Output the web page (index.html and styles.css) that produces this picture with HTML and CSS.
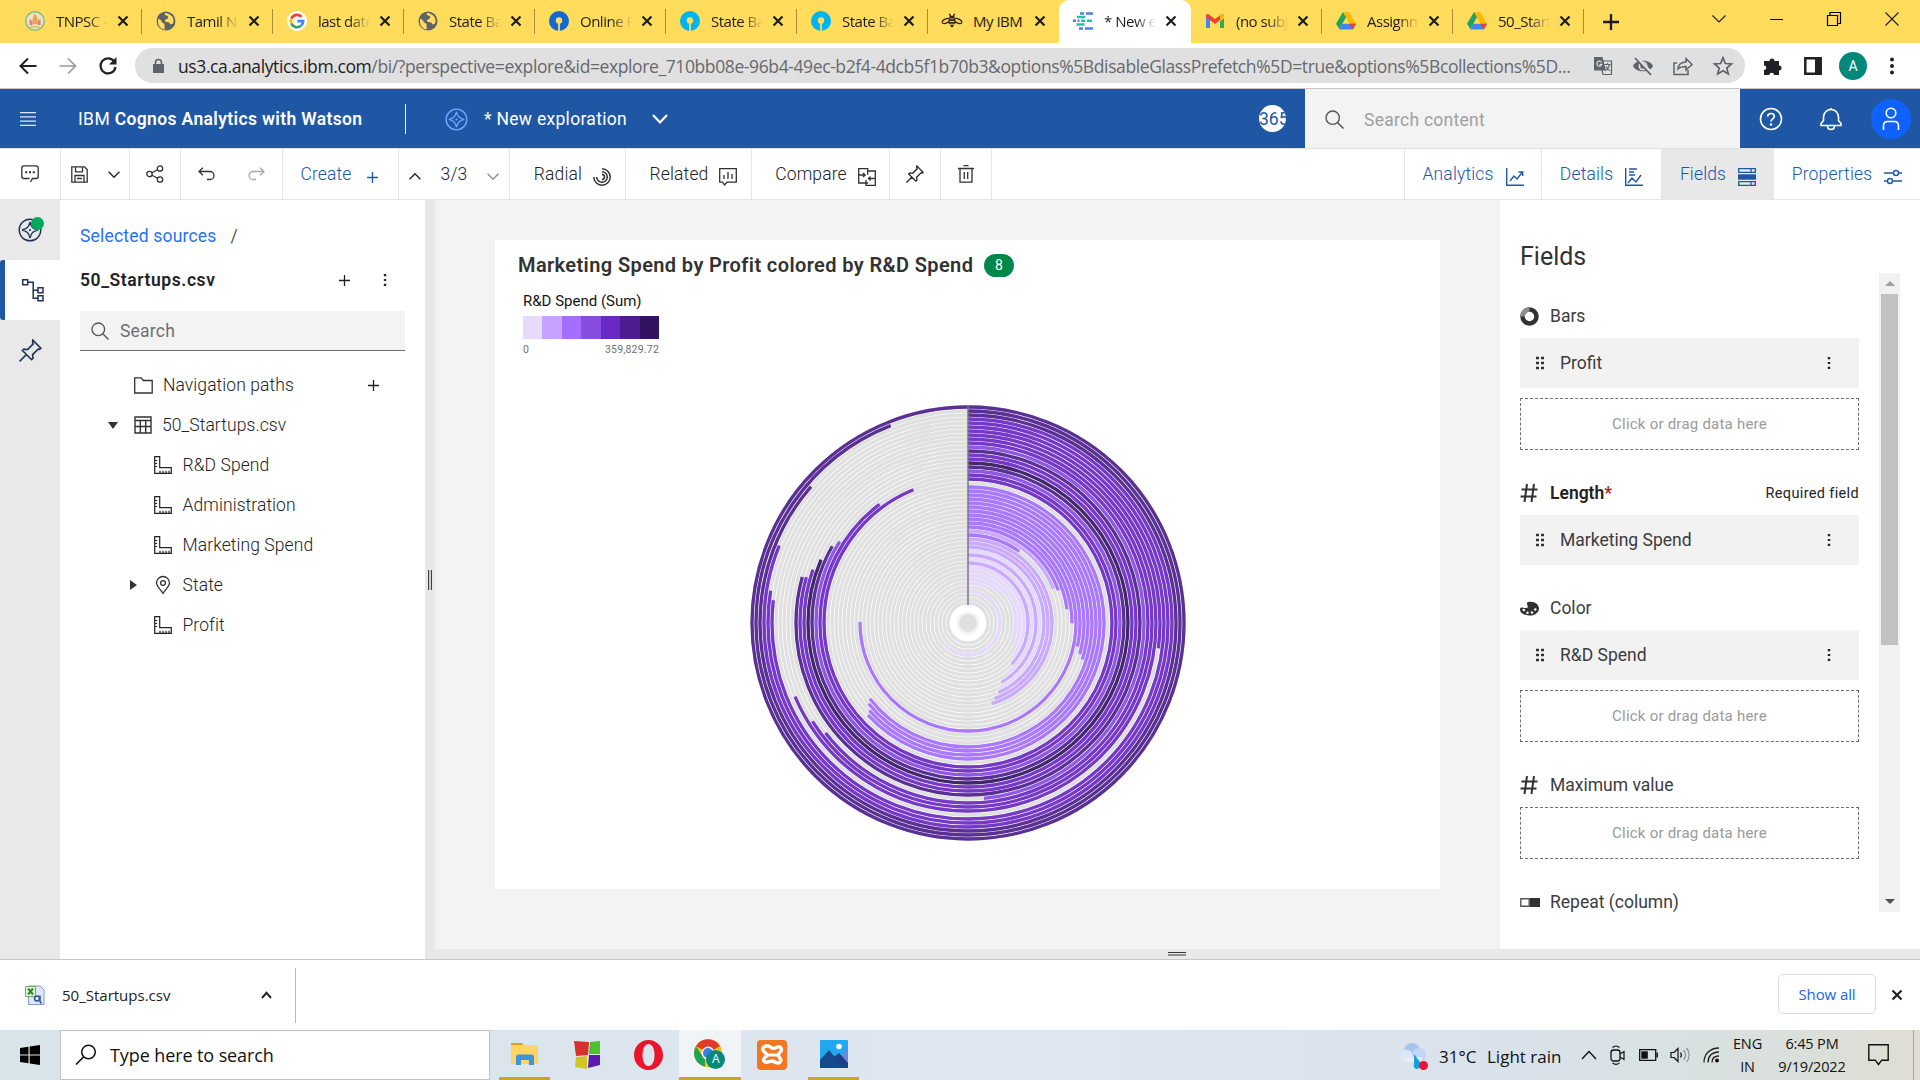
FILE: index.html
```html
<!DOCTYPE html>
<html lang="en">
<head>
<meta charset="utf-8">
<title>New exploration</title>
<link rel="stylesheet" href="styles.css">
</head>
<body>
<svg class="defs" width="0" height="0">
  <defs>
    <symbol id="close" viewBox="0 0 12 12"><path d="M1.5 1.5l9 9M10.500 1.500l-9 9" fill="none" stroke="currentColor" stroke-width="2.200"/></symbol>
    <symbol id="globe" viewBox="0 0 20 20"><circle cx="10" cy="10" r="9.500" fill="#5f6368"/><path d="M2 8c2 0 3 1 3.500 2.500S8 12 8.500 13.500 8 17 9 18.500C5 18 2 15 2 11zM9 2c-1 2 1 2.500 2.500 3S12 8 10 8.500s-1 2.500 1 2.500 3 1 3.500 2.500l2.500-1c1-2 .5-5-.5-6.500S12 2 9 2z" fill="#ffdc5c"/></symbol>
    <symbol id="drive" viewBox="0 0 20 18"><path d="M7 0h6L7 10.500 3.300 17 0 11.800z" fill="#1ea362"/><path d="M7 0h6l7 11.800h-6.500z" fill="#ffba00"/><path d="M6.300 11.800H20L17 17.500H3z" fill="#4285f4"/><path d="M13.500 11.800H20L16.700 17.500z" fill="#ea4335"/></symbol>
    <symbol id="sbi" viewBox="0 0 20 20"><circle cx="10" cy="10" r="10" fill="currentColor"/><circle cx="10" cy="9.500" r="3.200" fill="#ffdc5c"/><path d="M9.100 10h1.800v10H9.100z" fill="#ffdc5c"/></symbol>
    <symbol id="ruler" viewBox="0 0 18 18"><path d="M.7.700h5v11h11.600v5.600H.7zM.7 4.500h2.500M.7 7.500h2.500M.7 10.500h2.500M6 17v-2.300M9 17v-2.300M12 17v-2.300M15 17v-2.300" fill="none" stroke="currentColor" stroke-width="1.200"/></symbol>
    <symbol id="plus" viewBox="0 0 10 10"><path d="M5 0v10M0 5h10" stroke="currentColor" stroke-width="1.200"/></symbol>
    <symbol id="dots" viewBox="0 0 4 14"><path d="M.8 1h2.400v2.200H.8zM.8 5.900h2.400v2.200H.8zM.8 10.800h2.400V13H.8z" fill="currentColor"/></symbol>
    <symbol id="grip" viewBox="0 0 8 14"><path d="M0 .8h3v2.400H0zM5 .8h3v2.400H5zM0 5.800h3v2.400H0zM5 5.800h3v2.400H5zM0 10.800h3v2.400H0zM5 10.800h3v2.400H5z" fill="#323232"/></symbol>
    <symbol id="chev" viewBox="0 0 12 7"><path d="M.6.800L6 6.200 11.400.8" fill="none" stroke="currentColor" stroke-width="1.400"/></symbol>
    <symbol id="pin" viewBox="0 0 20 20"><path d="M12 1l7 7-1.200 1.200-1-.6-5 5 .4 3.200-1.200 1.200L3 10l1.200-1.200 3.200.4 5-5-.600-1zM6.700 13.300L.5 19.500" fill="none" stroke="currentColor" stroke-width="1.400"/></symbol>
    <symbol id="compass" viewBox="0 0 24 24"><circle cx="12" cy="12" r="10.800" fill="none" stroke="currentColor" stroke-width="1.400"/><path d="M12 4c1.200 5 3 6.800 8 8-5 1.200-6.800 3-8 8-1.200-5-3-6.800-8-8 5-1.200 6.800-3 8-8z" fill="none" stroke="currentColor" stroke-width="1.300"/><circle cx="12" cy="12" r="1.100" fill="currentColor"/></symbol>
    <symbol id="mag" viewBox="0 0 18 18"><circle cx="7.300" cy="7.300" r="6.300" fill="none" stroke="currentColor" stroke-width="1.300"/><path d="M11.800 11.800L17.500 17.500" stroke="currentColor" stroke-width="1.400"/></symbol>
    <symbol id="hash" viewBox="0 0 18 20"><path d="M7 1L4.500 19M14 1l-2.500 18M1.500 6.500h16M.5 13.500h16" stroke="#323232" stroke-width="2" fill="none"/></symbol>
  </defs>
</svg>

<div class="tabs">
  <div class="tab"><svg class="fav" viewBox="0 0 20 20"><circle cx="10" cy="10" r="9.300" fill="#e9e3c0" stroke="#7fb584" stroke-width="1.300"/><path d="M10 2l2.500 6-.5 5H8l-.5-5z" fill="#f0a050"/><path d="M4.500 8l3 2v4h-3zM15.500 8l-3 2v4h3z" fill="#e08080"/><path d="M5 15h10v2H5z" fill="#d8d060"/></svg><span>TNPSC - T</span><svg class="x"><use href="#close"/></svg></div>
  <div class="tab"><svg class="fav"><use href="#globe"/></svg><span>Tamil Nadu</span><svg class="x"><use href="#close"/></svg></div>
  <div class="tab"><svg class="fav" viewBox="0 0 20 20"><circle cx="10" cy="10" r="10" fill="#fff"/><g fill="none" stroke-width="2.700"><path d="M14.600 5.800A6.200 6.200 0 0 0 4.400 7.400" stroke="#ea4335"/><path d="M4.400 7.400a6.200 6.200 0 0 0 0 5.200" stroke="#fbbc05"/><path d="M4.400 12.600a6.200 6.200 0 0 0 9.600 2.200" stroke="#34a853"/><path d="M14 14.800a6.200 6.200 0 0 0 2.200-4.600H10.300" stroke="#4285f4"/></g></svg><span>last date t</span><svg class="x"><use href="#close"/></svg></div>
  <div class="tab"><svg class="fav"><use href="#globe"/></svg><span>State Bank</span><svg class="x"><use href="#close"/></svg></div>
  <div class="tab"><svg class="fav online"><use href="#sbi"/></svg><span>Online Re</span><svg class="x"><use href="#close"/></svg></div>
  <div class="tab"><svg class="fav sbi"><use href="#sbi"/></svg><span>State Bank</span><svg class="x"><use href="#close"/></svg></div>
  <div class="tab"><svg class="fav sbi"><use href="#sbi"/></svg><span>State Bank</span><svg class="x"><use href="#close"/></svg></div>
  <div class="tab nosep"><svg class="fav" viewBox="0 0 20 20"><g fill="none" stroke="#2b2613" stroke-width="1.300"><ellipse cx="4" cy="10" rx="4" ry="2" transform="rotate(-25 4 10)"/><ellipse cx="16" cy="10" rx="4" ry="2" transform="rotate(25 16 10)"/><path d="M7 3l2 2M13 3l-2 2"/></g><path d="M7.500 5h5v2.500h-5zM6.800 8.300h6.400v1.800H6.800zM6.500 11h7v1.800h-7zM7.500 13.700h5l-2.500 3z" fill="#2b2613"/></svg><span class="solid">My IBM</span><svg class="x"><use href="#close"/></svg></div>
  <div class="tab active"><svg class="fav" viewBox="0 0 20 20"><g stroke-width="2.500"><path d="M7 2.500h4M13 2.500h7M0 9.700h3M4.500 9.700h2M6 17.500h4M12 17.500h8" stroke="#4b7ff0"/><path d="M4 6h8M8 9.700h4M14 9.700h5M3.500 13.500h8" stroke="#1cc7b0"/></g></svg><span>* New exp</span><svg class="x"><use href="#close"/></svg></div>
  <div class="tab"><svg class="fav" viewBox="0 0 20 20"><path d="M1 4v13h4V8z" fill="#4285f4"/><path d="M19 4v13h-4V8z" fill="#34a853"/><path d="M1 4.500C1 3 3 2.500 4 3.500l6 4.500 6-4.500c1-1 3-.5 3 1V6l-9 7-9-7z" fill="#ea4335"/><path d="M15 4.200l1.500-1C18 3 19 3.500 19 5v2.500l-4 3z" fill="#fbbc04"/></svg><span>(no subject</span><svg class="x"><use href="#close"/></svg></div>
  <div class="tab"><svg class="fav"><use href="#drive"/></svg><span>Assignme</span><svg class="x"><use href="#close"/></svg></div>
  <div class="tab"><svg class="fav"><use href="#drive"/></svg><span>50_Startup</span><svg class="x"><use href="#close"/></svg></div>
  <svg class="newtab" viewBox="0 0 16 16"><path d="M8 0v16M0 8h16" stroke="#1b1b1b" stroke-width="2.300"/></svg>
  <div class="win">
    <svg width="14" height="8" viewBox="0 0 14 8"><path d="M.5.5L7 7 13.500.5" fill="none" stroke="#222" stroke-width="1.200"/></svg>
    <svg width="13" height="14" viewBox="0 0 13 14"><path d="M0 7.500h13" stroke="#000"/></svg>
    <svg width="14" height="14" viewBox="0 0 14 14"><path d="M.5 3.500h10v10H.5zM3 3.500v-3h10.500v11H11" fill="none" stroke="#000" stroke-width="1.200"/></svg>
    <svg width="14" height="14" viewBox="0 0 14 14"><path d="M.5.5l13 13M13.500.5l-13 13" stroke="#222" stroke-width="1.200"/></svg>
  </div>
</div>

<div class="address">
  <svg class="nav" viewBox="0 0 18 18"><path d="M17.500 9H1.500M9 1.500L1.500 9 9 16.500" fill="none" stroke="#202124" stroke-width="2"/></svg>
  <svg class="nav" viewBox="0 0 18 18"><path d="M.5 9h16M9 1.500L16.500 9 9 16.500" fill="none" stroke="#9a9b9d" stroke-width="1.700"/></svg>
  <svg class="nav" viewBox="0 0 18 18"><path d="M15.500 5A7.500 7.500 0 1 0 16.500 10" fill="none" stroke="#202124" stroke-width="2.200"/><path d="M17.500 0v7.500H10z" fill="#202124"/></svg>
  <div class="pill">
    <svg class="lock" width="11" height="14" viewBox="0 0 11 14"><path d="M0 5h11v9H0z" fill="#5f6368"/><path d="M2.500 6V3.500a3 3 0 0 1 6 0V6" fill="none" stroke="#5f6368" stroke-width="1.600"/></svg>
    <span class="url"><b>us3.ca.analytics.ibm.com</b>/bi/?perspective=explore&amp;id=explore_710bb08e-96b4-49ec-b2f4-4dcb5f1b70b3&amp;options%5BdisableGlassPrefetch%5D=true&amp;options%5Bcollections%5D...</span>
    <div class="pillicons">
      <svg width="20" height="20" viewBox="0 0 20 20"><path d="M7 5h11.500v13.500H10z" fill="none" stroke="#5f6368" stroke-width="1.200"/><path d="M1 1h8.500L13 14.500H1z" fill="#5f6368"/><path d="M8.500 6.300a2.500 2.500 0 1 0 .3 2H6.500" fill="none" stroke="#e0e0e0" stroke-width="1.200"/><path d="M11.500 8.500h6M14.500 7v1.500M16.500 9c-.5 2-2 4-4 5.500M13 10.500l4 4.500" fill="none" stroke="#5f6368" stroke-width="1.100"/></svg>
      <svg width="20" height="20" viewBox="0 0 20 20"><path d="M0 10c3-7 17-7 20 0-3 7-17 7-20 0z" fill="#5f6368"/><circle cx="10" cy="10" r="3.600" fill="none" stroke="#e0e0e0" stroke-width="1.800"/><path d="M3 1l16 17" stroke="#e0e0e0" stroke-width="3.500"/><path d="M2 2l16 17" stroke="#5f6368" stroke-width="1.800"/></svg>
      <svg width="20" height="20" viewBox="0 0 20 20"><path d="M4 7H1v11.500h14V14M5 13c.5-5 3-7 8-7V2.500l6 6-6 5.500v-3.500c-4 0-6 .5-8 2.500z" fill="none" stroke="#5f6368" stroke-width="1.500"/></svg>
      <svg width="20" height="20" viewBox="0 0 20 20"><path d="M10 1.800l2.400 5.700 6.100.5-4.700 4 1.500 6-5.300-3.300L4.700 18l1.500-6-4.700-4 6.100-.5z" fill="none" stroke="#5f6368" stroke-width="1.700"/></svg>
    </div>
  </div>
  <div class="exticons">
    <svg width="20" height="20" viewBox="0 0 20 20"><path d="M1 5h5.500a2.500 2.500 0 1 1 5 0H16v4.500a2.500 2.500 0 1 1 0 5V19h-5a2.300 2.300 0 0 0-4.600 0H1v-5a2.300 2.300 0 0 0 0-4.600z" fill="#202124"/></svg>
    <svg width="18" height="18" viewBox="0 0 18 18"><path d="M1.300 1.300h15.400v15.400H1.300z" fill="none" stroke="#202124" stroke-width="2.500"/><path d="M11 1h6v16h-6z" fill="#202124"/></svg>
    <div class="ava">A</div>
    <svg width="4" height="18" viewBox="0 0 4 18"><circle cx="2" cy="2.500" r="2" fill="#202124"/><circle cx="2" cy="9" r="2" fill="#202124"/><circle cx="2" cy="15.500" r="2" fill="#202124"/></svg>
  </div>
</div>

<header class="header">
  <svg class="burger" viewBox="0 0 16 14"><path d="M0 .7h16M0 4.900h16M0 9.100h16M0 13.300h16" stroke="#dfe9f7" stroke-width="1.200"/></svg>
  <div class="brand">IBM <b>Cognos Analytics with Watson</b></div>
  <i class="bar"></i>
  <svg class="comp"><use href="#compass"/></svg>
  <div class="expl">* New exploration</div>
  <svg class="hchev" viewBox="0 0 16 10"><path d="M1 1l7 7.500L15 1" fill="none" stroke="#fff" stroke-width="2.200"/></svg>
  <div class="c365"><span>365</span></div>
  <div class="hsearch"><svg width="19" height="19"><use href="#mag"/></svg><span>Search content</span></div>
  <div class="hicons">
    <svg width="24" height="24" viewBox="0 0 24 24"><circle cx="12" cy="12" r="10.500" fill="none" stroke="#fff" stroke-width="1.600"/><path d="M8.700 9.500c0-4 6.600-4 6.600 0 0 2.500-3.300 2.200-3.300 5" fill="none" stroke="#fff" stroke-width="1.700"/><circle cx="12" cy="17.500" r="1.200" fill="#fff"/></svg>
    <svg width="24" height="24" viewBox="0 0 24 24"><path d="M12 1v2M2 18.500v-2l2.500-3V10a7.500 7.500 0 0 1 15 0v3.500l2.500 3v2zM8.500 19c0 4.500 7 4.500 7 0" fill="none" stroke="#fff" stroke-width="1.600"/></svg>
    <div class="user"><svg width="18" height="24" viewBox="0 0 18 24"><circle cx="9" cy="6" r="4.800" fill="none" stroke="#fff" stroke-width="1.600"/><path d="M1.500 23v-4c0-3 1.500-4.500 4-4.500h7c2.500 0 4 1.500 4 4.500v4" fill="none" stroke="#fff" stroke-width="1.600"/></svg></div>
  </div>
</header>

<div class="toolbar">
  <div class="tb w60"><svg width="18" height="18" viewBox="0 0 18 18"><path d="M9.500 17l2-3.500H15c1.500 0 2.200-.7 2.200-2V3c0-1.500-.7-2.200-2.200-2.200H3C1.500.8.800 1.500.8 3v8.500c0 1.300.7 2 2.200 2h5.500" fill="none" stroke="#323232" stroke-width="1.300"/><path d="M4.200 6.300h2v2h-2zM8 6.300h2v2H8zM11.800 6.300h2v2h-2z" fill="#323232"/></svg></div>
  <div class="tb w69 save"><svg width="17" height="17" viewBox="0 0 17 17"><path d="M.8.800h12.700l2.700 2.700v12.700H.8zM4.500.8v5h7v-5M4 16V9.500h9V16M6 12.500h5" fill="none" stroke="#323232" stroke-width="1.300"/></svg><svg width="12" height="7"><use href="#chev"/></svg></div>
  <div class="tb w51"><svg width="18" height="18" viewBox="0 0 18 18"><g fill="none" stroke="#323232" stroke-width="1.300"><circle cx="3.500" cy="9" r="2.700"/><circle cx="14" cy="3.500" r="2.700"/><circle cx="14" cy="14.500" r="2.700"/><path d="M6 7.800l5.500-3M6 10.200l5.500 3"/></g></svg></div>
  <div class="tb w102 undo"><svg width="17" height="14" viewBox="0 0 17 14"><path d="M5 .8L1 4.500l4 3.700M1 4.500h11a4 4 0 0 1 0 8H9" fill="none" stroke="#323232" stroke-width="1.300"/></svg><svg width="17" height="14" viewBox="0 0 17 14"><path d="M12 .8l4 3.700-4 3.700M16 4.500H5a4 4 0 0 0 0 8h3" fill="none" stroke="#a9a9a9" stroke-width="1.300"/></svg></div>
  <div class="tb w116 blue create"><span>Create</span><svg class="lo" width="11" height="11"><use href="#plus"/></svg></div>
  <div class="tb w111 pages"><svg class="up" width="12" height="7"><use href="#chev"/></svg><span>3/3</span><svg class="dn" width="12" height="7"><use href="#chev"/></svg></div>
  <div class="tb w116 lab"><span>Radial</span><svg class="lo" width="18" height="18" viewBox="0 0 18 18"><g fill="none" stroke="#323232" stroke-width="1.500"><path d="M9 .8a8.200 8.200 0 1 1-8.200 8.200"/><path d="M9 3.700a5.300 5.300 0 1 1-5.300 5.300"/><path d="M9 6.500a2.500 2.500 0 0 1 0 5"/></g></svg></div>
  <div class="tb w126 lab"><span>Related</span><svg class="lo" width="18" height="18" viewBox="0 0 18 18"><path d="M.7.700h16.600v13.500H8L5.500 17 3.500 14.200H.7zM5 11V7M9 11V4M13 11V6" fill="none" stroke="#323232" stroke-width="1.300"/></svg></div>
  <div class="tb w138 lab"><span>Compare</span><svg class="lo" width="18" height="18" viewBox="0 0 18 18"><path d="M10 15H.7V.7h9v6M8 12V17.300h9.300V3H10M1 7h6M5 5l2.200 2L5 9M16.500 10.500h-6M12.500 8.500l-2 2 2 2" fill="none" stroke="#323232" stroke-width="1.300"/></svg></div>
  <div class="tb w51"><svg width="18" height="18" class="ink"><use href="#pin"/></svg></div>
  <div class="tb w51"><svg width="16" height="18" viewBox="0 0 16 18"><path d="M0 3.500h16M5.500.7h5M2 3.500v13.700h12V3.500M6.300 7v7M9.700 7v7" fill="none" stroke="#323232" stroke-width="1.300"/></svg></div>
  <div class="right">
    <div class="tb w137 blue lab2"><span>Analytics</span><svg class="lo" width="18" height="18" viewBox="0 0 18 18"><path d="M.7 0v17.300H18M4 13l4-5 3 3 5.500-7M12.500 4h4.200v4" fill="none" stroke="#1f57a4" stroke-width="1.400"/></svg></div>
    <div class="tb w120 blue lab2"><span>Details</span><svg class="lo" width="18" height="18" viewBox="0 0 18 18"><path d="M.7 0v17.300H18M4 1h8M4 4h5M4 7h6M3 15l4-5 4 4 5-7" fill="none" stroke="#1f57a4" stroke-width="1.400"/></svg></div>
    <div class="tb w112 blue lab2 on"><span>Fields</span><svg class="lo" width="18" height="18" viewBox="0 0 18 18"><path d="M.7.700h16.600v3.600H.7zM.7 13.700h16.600v3.600H.7zM13 1v3M13 14v3" fill="none" stroke="#1f57a4" stroke-width="1.300"/><path d="M0 6.300h18v5.400H0z" fill="#1f57a4"/></svg></div>
    <div class="tb w146 blue lab2"><span>Properties</span><svg class="lo" width="18" height="18" viewBox="0 0 18 18"><g fill="none" stroke="#1f57a4" stroke-width="1.400"><circle cx="12" cy="5" r="2.500"/><circle cx="6" cy="13" r="2.500"/><path d="M0 5h9.500M14.500 5H18M0 13h3.500M8.500 13H18"/></g></svg></div>
  </div>
</div>

<main class="main">
  <nav class="rail">
    <div class="ri"><svg width="24" height="24"><use href="#compass"/></svg><i class="green"></i></div>
    <div class="ri sel"><svg width="24" height="24" viewBox="0 0 24 24"><path d="M1.700 1.700h5v5h-5zM17 9.700h5v5h-5zM17 17.700h5v5h-5zM6.700 4.200h5.500v16H17M12.200 12.200H17" fill="none" stroke="#1d3458" stroke-width="1.500"/></svg></div>
    <div class="ri"><svg width="23" height="23"><use href="#pin"/></svg></div>
  </nav>
  <aside class="sources">
    <div class="crumb"><a>Selected sources</a><em>/</em></div>
    <div class="src"><b>50_Startups.csv</b><svg width="11" height="11"><use href="#plus"/></svg><svg width="4" height="14"><use href="#dots"/></svg></div>
    <div class="find"><svg width="18" height="18"><use href="#mag"/></svg><span>Search</span></div>
    <div class="row l1"><svg width="19" height="17" viewBox="0 0 19 17"><path d="M.7.800h6.500l2.300 2.700h8.700v12.500H.7z" fill="none" stroke="#323232" stroke-width="1.300"/></svg><span>Navigation paths</span><svg class="add" width="11" height="11"><use href="#plus"/></svg></div>
    <div class="row l1"><i class="tri down"></i><svg width="18" height="18" viewBox="0 0 18 18"><path d="M1 1h16v16H1zM1 4.500h16M1 10.500h16M6.300 4.500V17M11.700 4.500V17" fill="none" stroke="#323232" stroke-width="1.400"/></svg><span>50_Startups.csv</span></div>
    <div class="row l2"><svg width="18" height="18"><use href="#ruler"/></svg><span>R&amp;D Spend</span></div>
    <div class="row l2"><svg width="18" height="18"><use href="#ruler"/></svg><span>Administration</span></div>
    <div class="row l2"><svg width="18" height="18"><use href="#ruler"/></svg><span>Marketing Spend</span></div>
    <div class="row l2"><i class="tri side"></i><svg width="18" height="18" viewBox="0 0 18 18"><path d="M9 17.300C6 13 2.500 10 2.500 7a6.500 6.500 0 0 1 13 0c0 3-3.500 6-6.500 10.300z" fill="none" stroke="#323232" stroke-width="1.300"/><circle cx="9" cy="7" r="2.400" fill="none" stroke="#323232" stroke-width="1.300"/></svg><span>State</span></div>
    <div class="row l2"><svg width="18" height="18"><use href="#ruler"/></svg><span>Profit</span></div>
  </aside>
  <div class="split"><i></i></div>
  <div class="work">
    <div class="upper">
      <section class="canvas">
        <div class="card">
          <div class="title"><h2>Marketing Spend by Profit colored by R&amp;D Spend</h2><span class="badge">8</span></div>
          <div class="ltitle"><span>R&amp;D Spend (Sum)</span></div>
          <div class="legend"><i class="s0"></i><i class="s1"></i><i class="s2"></i><i class="s3"></i><i class="s4"></i><i class="s5"></i><i class="s6"></i></div>
          <div class="scale"><span>0</span><span>359,829.72</span></div>
          <svg class="radial" id="radial" width="440" height="440" viewBox="-220 -220 440 440"></svg>
        </div>
      </section>
      <aside class="fields">
        <h3><span>Fields</span></h3>
        <div class="fcols">
        <div class="flist">
          <div class="fh"><svg width="19" height="19" viewBox="0 0 19 19"><circle cx="9.500" cy="9.500" r="7" fill="none" stroke="#323232" stroke-width="4.500"/><path d="M2.500 9.500a7 7 0 0 1 7-7" fill="none" stroke="#8c8c8c" stroke-width="4.500"/></svg><span>Bars</span></div>
          <div class="chip"><svg width="8" height="14"><use href="#grip"/></svg><span>Profit</span><svg width="4" height="14"><use href="#dots"/></svg></div>
          <div class="drop"><span>Click or drag data here</span></div>
          <div class="fh"><svg width="18" height="20"><use href="#hash"/></svg><b>Length</b><em>*</em><small>Required field</small></div>
          <div class="chip"><svg width="8" height="14"><use href="#grip"/></svg><span>Marketing Spend</span><svg width="4" height="14"><use href="#dots"/></svg></div>
          <div class="fh"><svg width="19" height="15" viewBox="0 0 19 15"><path d="M8 1c6-1.500 11 2 11 6.500S14 15 9 14.500 0 12 0 8.500 3 7 5.500 7 8 6 7.500 4.500 6.500 1.500 8 1z" fill="#323232"/><g fill="#fff"><circle cx="3.800" cy="9" r="1.300"/><circle cx="7.500" cy="11.800" r="1.200"/><circle cx="12" cy="11.500" r="1.200"/><circle cx="15.300" cy="8.500" r="1.200"/></g></svg><span>Color</span></div>
          <div class="chip"><svg width="8" height="14"><use href="#grip"/></svg><span>R&amp;D Spend</span><svg width="4" height="14"><use href="#dots"/></svg></div>
          <div class="drop"><span>Click or drag data here</span></div>
          <div class="fh"><svg width="18" height="20"><use href="#hash"/></svg><span>Maximum value</span></div>
          <div class="drop"><span>Click or drag data here</span></div>
          <div class="fh"><svg width="20" height="9" viewBox="0 0 20 9"><path d="M.8.800h8.400v7.400H.8z" fill="#fff" stroke="#555" stroke-width="1.400"/><path d="M10 0h10v9H10z" fill="#323232"/></svg><span>Repeat (column)</span></div>
        </div>
        <div class="sbar"><i class="sup"></i><i class="thumb"></i><i class="sdn"></i></div>
        </div>
      </aside>
    </div>
    <div class="hsplit"><i></i></div>
  </div>
</main>

<div class="downloads">
  <div class="dl">
    <svg width="20" height="20" viewBox="0 0 20 20"><path d="M3.500 1H15l4 4v14.500H3.500z" fill="#dce8f8" stroke="#7d9ccc"/><path d="M.5 1.500h10v10H.5z" fill="#e7f5e2" stroke="#6da862"/><path d="M3 3.500l5 6M8 3.500l-5 6" stroke="#2a8a2e" stroke-width="2"/><circle cx="12" cy="13.500" r="2.500" fill="none" stroke="#2d5590" stroke-width="1.500"/><path d="M15 10.500v6l1.500 2" fill="none" stroke="#2d5590" stroke-width="1.500"/></svg>
    <span>50_Startups.csv</span>
    <svg class="dchev" width="11" height="8" viewBox="0 0 11 8"><path d="M1 7l4.500-5.200L10 7" fill="none" stroke="#222" stroke-width="2"/></svg>
  </div>
  <div class="showall"><span>Show all</span></div>
  <svg class="dx" width="12" height="12"><use href="#close"/></svg>
</div>

<footer class="taskbar">
  <div class="start"><svg width="20" height="20" viewBox="0 0 20 20"><path d="M0 3l8.500-1.300v7.800H0zM9.700 1.500L20 0v9.500H9.700zM0 10.600h8.500v7.700L0 17zM9.700 10.600H20V20L9.700 18.500z" fill="#000"/></svg></div>
  <div class="tsearch"><svg width="22" height="22" viewBox="0 0 22 22"><circle cx="13.500" cy="8" r="6.800" fill="none" stroke="#111" stroke-width="1.500"/><path d="M8.700 12.800L1 20.500" stroke="#111" stroke-width="1.600"/></svg><span>Type here to search</span></div>
  <div class="apps">
    <div class="app run2"><svg width="28" height="24" viewBox="0 0 28 24"><path d="M0 1h11l2 3H0z" fill="#e0a010"/><path d="M0 3h27v19H0z" fill="#ffd561"/><path d="M5 23v-8c0-1.500 1-2.500 2.500-2.500h13c1.500 0 2.500 1 2.500 2.500v8h-5v-5h-8v5z" fill="#3b95dd"/></svg></div>
    <div class="app"><svg width="28" height="30" viewBox="0 0 28 30"><path d="M1 1l15 1-1 13-12 1z" fill="#d9302c"/><path d="M17 2l10-1v13H16z" fill="#4fc02e"/><path d="M3 17l11-1v13l-12-2z" fill="#cfc626"/><path d="M16 15h11v10l-12 3z" fill="#5b1cae"/></svg></div>
    <div class="app"><svg width="29" height="30" viewBox="0 0 29 30"><path fill-rule="evenodd" d="M14.500 0C23 0 29 7 29 15s-6 15-14.500 15S0 23 0 15 6 0 14.500 0zm0 4C10.500 4 8.500 9 8.500 15s2 11 6 11 6-5 6-11-2-11-6-11z" fill="#e8152b"/></svg></div>
    <div class="app on"><svg width="32" height="32" viewBox="0 0 32 32"><circle cx="14" cy="15" r="14" fill="#fbc116"/><path d="M14 15L2 8a14 14 0 0 1 24 0z" fill="#e23b2e"/><path d="M2 8l9 14 0 6.700A14 14 0 0 1 2 8z" fill="#1da35a"/><circle cx="14" cy="15" r="6.500" fill="#fff"/><circle cx="14" cy="15" r="5" fill="#3b7ded"/><circle cx="21.500" cy="21.500" r="9.500" fill="#08897b"/></svg><em>A</em></div>
    <div class="app"><svg width="30" height="30" viewBox="0 0 30 30"><rect width="30" height="30" rx="4" fill="#f37623"/><path d="M6 8c3-4 6-2 9 0s7-4 9 0-3 5-3 7 5 4 2 7-5-1-8-1-6 3-8 0 3-4 3-6-6-4-4-7z" fill="none" stroke="#fff" stroke-width="3.500"/><path d="M9 15h12" stroke="#fff" stroke-width="3"/></svg></div>
    <div class="app run"><svg width="28" height="28" viewBox="0 0 28 28"><rect width="28" height="28" rx="1" fill="#22a8ee"/><path d="M28 7v21H14z" fill="#7285dc"/><path d="M0 20l9-10 15 18H0z" fill="#134a8e"/><path d="M14 17l5-4 9 10v5H22z" fill="#1d3f86"/><circle cx="19" cy="6.500" r="2.800" fill="#fff"/></svg></div>
  </div>
  <div class="tray">
    <svg class="wx" width="30" height="28" viewBox="0 0 30 28"><circle cx="13" cy="8" r="8" fill="#a9c4ec"/><circle cx="7" cy="13" r="6.500" fill="#dbe6f7"/><circle cx="20" cy="12" r="7" fill="#c3d5f2"/><path d="M5 14h18v5H5z" fill="#e4ecf8"/><path d="M15 11l6 8c2 4-1 7-3 7s-4-2-3-5z" fill="#1a9fe0"/><circle cx="24.500" cy="22.500" r="4.500" fill="#e5163a"/></svg>
    <span class="deg">31°C</span><span class="rain">Light rain</span>
    <div class="ticons">
      <svg width="16" height="10" viewBox="0 0 16 10"><path d="M1 9l7-7.500L15 9" fill="none" stroke="#111" stroke-width="1.400"/></svg>
      <svg width="16" height="20" viewBox="0 0 16 20"><rect x="1" y="5" width="9" height="11" rx="2.500" fill="none" stroke="#111" stroke-width="1.300"/><path d="M10 9l4-2.500v8L10 12M2.500 2.500c2-2 5-2 7 0M2.500 18c2 1.500 5 1.500 7 0" fill="none" stroke="#111" stroke-width="1.200"/></svg>
      <svg width="19" height="12" viewBox="0 0 19 12"><path d="M.7.700h16v10.600h-16zM18.300 3.500v5" fill="none" stroke="#111" stroke-width="1.300"/><path d="M2.300 2.300h6.500v7.400H2.300z" fill="#111"/></svg>
      <svg width="20" height="16" viewBox="0 0 20 16"><path d="M1 5.500h3l4-4v13l-4-4H1z" fill="none" stroke="#111" stroke-width="1.200"/><path d="M10.500 5.500c1 1.500 1 3.500 0 5" fill="none" stroke="#111" stroke-width="1.200"/><path d="M13.500 3c2.500 3 2.500 7 0 10M16.500 1c3.500 4 3.500 10 0 14" fill="none" stroke="#8d9596" stroke-width="1.200"/></svg>
      <svg width="17" height="16" viewBox="0 0 17 16"><path d="M1 15.500C1 7 7 1 16 1M5 15.500C5 9 9 5 16 5M9 15.500C9 11.500 11.500 9 16 9" fill="none" stroke="#222" stroke-width="1.300"/><circle cx="14" cy="13.500" r="2" fill="#111"/></svg>
    </div>
    <div class="two lang"><span>ENG</span><span>IN</span></div>
    <div class="two clock"><span>6:45 PM</span><span>9/19/2022</span></div>
    <svg class="note" width="21" height="22" viewBox="0 0 21 22"><path d="M.8.800h19.400v15.400h-6.500L10.500 20.500 7.300 16.200H.8z" fill="none" stroke="#111" stroke-width="1.400"/></svg>
    <i class="peek"></i>
  </div>
</footer>
<script src="radial.js"></script>
</body>
</html>
```
FILE: styles.css
```css
* { box-sizing: border-box; }
body { margin: 0; width: 1920px; height: 1080px; overflow: hidden; background: #fff; font-family: Roboto, "Liberation Sans", sans-serif; font-size: 17.5px; font-weight: 300; color: #222; display: flex; flex-direction: column; }
svg { display: block; flex: none; overflow: visible; }
.defs { display: none; }
i, em { font-style: normal; }

.tabs { height: 43px; flex: none; background: #ffdc5c; padding-left: 11px; display: flex; align-items: center; font-family: "Open Sans", sans-serif; font-weight: 400; font-size: 15px; letter-spacing: -0.5px; color: #1e1e1e; }
.tab { width: 131px; height: 43px; display: flex; align-items: center; padding: 0 0 2px 14px; position: relative; flex: none; }
.tab::after { content: ""; position: absolute; right: 0; top: 9px; width: 1px; height: 25px; background: #a58e3d; }
.tab.nosep::after, .tab.active::after { display: none; }
.fav { width: 20px; height: 20px; margin-right: 11px; }
.online { color: #1368d0; }
.sbi { color: #00b5ef; }
.tab span { width: 52px; flex: none; overflow: hidden; white-space: nowrap; -webkit-mask-image: linear-gradient(90deg, #000 60%, transparent); mask-image: linear-gradient(90deg, #000 60%, transparent); }
.tab span.solid { -webkit-mask-image: none; mask-image: none; }
.x { width: 12px; height: 12px; margin-left: 8.500px; }
.tab.active { background: #fff; border-radius: 10px 10px 0 0; width: 132px; }
.newtab { width: 16px; height: 16px; margin-left: 19px; }
.win { display: flex; align-items: center; margin: -6px 0 0 93px; gap: 44px; }

.address { height: 46px; flex: none; border-bottom: 1px solid #c6c6c6; display: flex; align-items: center; padding-left: 19px; font-weight: 400; }
.nav { width: 18px; height: 18px; margin-right: 22px; }
.pill { width: 1610px; height: 35px; border-radius: 18px; background: #e0e0e0; display: flex; align-items: center; padding-left: 18px; margin-left: -4px; }
.url { font-family: "Open Sans", sans-serif; font-size: 17.500px; letter-spacing: -0.392px; color: #66696d; margin-left: 14px; white-space: nowrap; width: 1396px; flex: none; }
.url b { font-weight: 400; color: #202124; }
.pillicons { display: flex; gap: 20px; margin-left: 19px; }
.exticons { display: flex; align-items: center; margin-left: 18px; }
.exticons svg:nth-child(2) { margin: 0 17px 0 21px; }
.ava { width: 28px; height: 28px; border-radius: 50%; background: #00897b; color: #fff; font-size: 14px; display: flex; align-items: center; justify-content: center; margin-right: 23px; }

.header { height: 59px; flex: none; background: #2057a5; color: #fff; display: flex; align-items: center; font-weight: 400; }
.burger { width: 16px; height: 14px; margin-left: 20px; }
.brand { width: 327px; margin-left: 42px; white-space: nowrap; letter-spacing: 0.36px; }
.brand b { font-weight: 600; }
.bar { width: 1px; height: 30px; background: #fff; }
.comp { width: 23px; height: 23px; color: #74a8ff; margin: 2px 16px 0 39px; }
.expl { width: 168px; white-space: nowrap; letter-spacing: 0.3px; }
.hchev { width: 16px; height: 10px; }
.c365 { width: 27px; height: 27px; border-radius: 50%; background: #fff; color: #2057a5; overflow: hidden; margin-left: 591px; display: flex; align-items: center; }
.hsearch { width: 435px; height: 59px; background: #f3f3f3; margin-left: 19px; display: flex; align-items: center; padding: 2px 0 0 20px; gap: 20px; color: #555; }
.hsearch span { color: #a0a0a0; letter-spacing: 0.26px; }
.hicons { display: flex; align-items: center; padding-left: 19px; gap: 36px; }
.user { width: 40px; height: 40px; border-radius: 50%; background: #0f62fe; display: flex; align-items: center; justify-content: center; margin-left: -8px; }

.toolbar { height: 52px; flex: none; border-top: 1px solid #e0e0e0; border-bottom: 1px solid #e5e5e5; display: flex; letter-spacing: 0.15px; }
.tb { border-right: 1px solid #e5e5e5; display: flex; align-items: center; justify-content: center; flex: none; }
.w60 { width: 61px; } .w69 { width: 69px; } .w51 { width: 51px; } .w102 { width: 102px; } .w116 { width: 116px; }
.w111 { width: 111px; } .w126 { width: 126px; } .w138 { width: 138px; } .w137 { width: 137px; } .w120 { width: 120px; } .w112 { width: 112px; } .w146 { width: 146px; }
.save { gap: 20px; } .undo { gap: 33px; }
.blue { color: #2057a5; }
.lo { margin-top: 5px; }
.create { gap: 15px; padding-right: 3px; } .create svg { margin-top: 6px; }
.pages { gap: 20px; }
.up { transform: rotate(180deg); margin-top: 4px; } .dn { color: #8d8d8d; margin-top: 4px; }
.lab { gap: 11px; padding-left: 10px; }
.lab2 { gap: 12px; }
.right { margin-left: auto; display: flex; border-left: 1px solid #e5e5e5; }
.right .tb:nth-child(n+3) { border-right: 0; }
.on.lab2 { background: #e8e8e8; }

.main { height: 759px; flex: none; display: flex; }
.rail { width: 60px; background: #e9e9e9; }
.ri { height: 60px; display: flex; align-items: center; justify-content: center; color: #1d3458; position: relative; }
.ri.sel { background: #fff; border-left: 5px solid #2057a5; border-radius: 3px 0 0 3px; }
.green { position: absolute; left: 31px; top: 17px; width: 13px; height: 13px; border-radius: 50%; background: #00a85a; }
.sources { width: 365px; padding: 24px 20px 0; }
.crumb { height: 24px; display: flex; align-items: center; color: #2970f2; letter-spacing: 0.19px; font-weight: 400; }
.crumb em { color: #555; margin-left: 14px; }
.src { height: 24px; margin-top: 20px; display: flex; align-items: center; }
.src b { font-weight: 600; width: 259px; letter-spacing: 0.58px; }
.src svg + svg { margin-left: 33px; }
.find { height: 40px; margin: 19px 0 14px; background: #f3f3f3; border-bottom: 1px solid #6f6f6f; display: flex; align-items: center; padding-left: 11px; gap: 11px; color: #555; }
.find span { color: #707070; letter-spacing: 0.21px; font-weight: 400; }
.row { height: 40px; display: flex; align-items: center; position: relative; letter-spacing: 0.08px; }
.row.l1 { padding-left: 54px; } .row.l1 span { margin-left: 10px; width: 205px; }
.row.l1 svg + span { flex: none; }
.row.l2 { padding-left: 74px; } .row.l2 span { margin-left: 10.500px; }
.tri { position: absolute; border: 5px solid transparent; }
.tri.down { left: 28px; top: 17px; border-top: 7px solid #323232; }
.tri.side { left: 50px; top: 15px; border-left: 7px solid #323232; }
.split { width: 10px; background: #e8e8e8; display: flex; align-items: center; justify-content: center; }
.split i { width: 4px; height: 20px; border: solid #444; border-width: 0 1px; background: #ccc; }
.work { flex: 1; display: flex; flex-direction: column; }
.upper { flex: 1; display: flex; }
.hsplit { height: 10px; background: #e9e9e9; display: flex; align-items: center; padding-left: 733px; }
.hsplit i { width: 18px; height: 4px; border-top: 1px solid #333; border-bottom: 2px solid #8d8d8d; }
.canvas { width: 1065px; background: #f3f3f3; padding: 40px 60px; }
.card { height: 649px; background: #fff; padding: 12px 0 0 23px; }
.title { display: flex; height: 26px; align-items: center; gap: 11px; }
h2 { margin: 0; font-size: 20px; font-weight: 600; white-space: nowrap; width: 455px; letter-spacing: 0.39px; color: #323232; }
.badge { width: 30px; height: 23px; border-radius: 12px; background: #00884b; color: #fff; font-weight: 400; font-size: 14px; display: flex; align-items: center; justify-content: center; }
.ltitle { margin: 13px 0 0 5px; height: 20px; line-height: 20px; font-size: 15px; font-weight: 400; color: #161616; }
.legend { margin: 5px 0 0 5px; display: flex; width: 136px; height: 23px; }
.legend i { flex: 1; }
.s0 { background: #e8daff; } .s1 { background: #c6a3ff; } .s2 { background: #a56eff; } .s3 { background: #874ce0; } .s4 { background: #6929c4; } .s5 { background: #4c1c90; } .s6 { background: #31135e; }
.scale { margin: 4px 0 0 5px; width: 136px; display: flex; justify-content: space-between; font-size: 10.500px; font-weight: 400; letter-spacing: 0.2px; line-height: 14px; color: #6f6f6f; }
.radial { margin: 45.500px 0 0 230px; }
.track { fill: none; stroke: #e0e0e0; stroke-width: 3.300; }
.ring { fill: none; stroke-width: 3.300; }
.k0 { stroke: #e6dafc; } .k1 { stroke: #c9aaff; } .k2 { stroke: #aa78ff; } .k3 { stroke: #8f58e4; } .k4 { stroke: #7538c8; } .k5 { stroke: #5a3095; } .k6 { stroke: #42276c; }

.fields { width: 420px; padding-left: 20px; }
h3 { margin: 40px 0 0; height: 33px; line-height: 33px; font-size: 25px; font-weight: 400; color: #323232; }
.fcols { display: flex; }
.flist { width: 339px; }
.fh { height: 44px; display: grid; grid-template-columns: 30px auto auto 1fr; align-items: center; margin-top: 21px; }
.fh span, .chip span { font-weight: 400; color: #3c3c3c; }
.fh b { font-weight: 600; } .fh em { color: #b3262e; font-weight: 600; }
.fh small { font-size: 14.500px; font-weight: 400; letter-spacing: 0.35px; justify-self: end; }
.chip { height: 50px; background: #f2f2f2; display: flex; align-items: center; padding: 0 28px 0 16px; }
.chip span { margin: 0 auto 0 16px; }
.drop { margin-top: 10px; height: 52px; border: 1px dashed #6f6f6f; display: flex; align-items: center; justify-content: center; font-size: 15px; font-weight: 400; letter-spacing: 0.23px; color: #9a9a9a; }
.fh + .drop { margin-top: 0; }
.sbar { margin-left: 20px; width: 21px; height: 639px; background: #f1f1f1; display: flex; flex-direction: column; align-items: center; }
.sup { border: 5px solid transparent; border-bottom-color: #a0a0a0; border-top: 0; margin: 8px 0; }
.thumb { width: 17px; height: 351px; background: #c1c1c1; }
.sdn { border: 5px solid transparent; border-top-color: #505050; border-bottom: 0; margin: auto 0 8px; }

.downloads { height: 71px; flex: none; border-top: 1px solid #c6c6c6; display: flex; align-items: center; font-family: "Open Sans", sans-serif; font-weight: 400; font-size: 15px; color: #222; }
.dl { width: 296px; height: 55px; border-right: 1px solid #b9b9b9; display: flex; align-items: center; padding-left: 25px; }
.dl span { margin-left: 17px; width: 199px; white-space: nowrap; }
.showall { margin-left: 1482px; width: 98px; height: 40px; border: 1px solid #dadce0; border-radius: 5px; color: #1a66e0; letter-spacing: -0.1px; display: flex; align-items: center; justify-content: center; margin-top: -2px; }
.dx { margin-left: 15px; }

.taskbar { height: 50px; flex: none; display: flex; background: linear-gradient(90deg, #d9e3ea, #dee7f1 55%, #d9e2ea 80%, #d9e0dd 92%, #dfddd2); font-family: "Open Sans", sans-serif; font-weight: 400; color: #111; }
.start { width: 60px; display: flex; align-items: center; justify-content: center; }
.tsearch { width: 430px; background: #fff; border: 1px solid #bfc4c7; display: flex; align-items: center; padding-left: 14px; gap: 13px; font-size: 18px; letter-spacing: -0.1px; }
.apps { display: flex; padding-left: 9px; }
.app { width: 62px; display: flex; align-items: center; justify-content: center; position: relative; }
.app:first-child { width: 51px; }
.apps .app:nth-child(2) { margin-left: 6px; width: 61px; }
.run2 { border-bottom: 3px solid #c9a62a; }
.run { width: 51px; margin-left: 5px; border-bottom: 3px solid #c9a62a; }
.app.on { background: #f0f4f8; border-bottom: 3px solid #c9a62a; }
.app em { position: absolute; left: 33px; top: 20px; font-size: 12px; color: #fff; }
.tray { margin-left: auto; display: flex; align-items: center; height: 50px; width: 521px; }
.wx { margin-top: 4px; } .deg, .rain { font-size: 17px; white-space: nowrap; margin-top: 2px; }
.deg { margin-left: 10px; width: 48px; } .rain { width: 94px; }
.ticons { display: flex; align-items: center; width: 139px; justify-content: space-between; flex: none; }
.two { display: flex; flex-direction: column; align-items: center; font-size: 14.500px; line-height: 23px; white-space: nowrap; letter-spacing: -0.15px; }
.lang { margin-left: 12px; width: 31px; flex: none; } .clock { margin-left: 14px; width: 70px; flex: none; }
.note { margin-left: 21px; } .peek { width: 1px; height: 50px; background: #a4a9a5; margin-left: 24px; }
```
FILE: radial.js
```js
// [colour step, sweep in degrees] for each bar, outermost first
const bars = [
  [5,360],[5,338.6],[5,311],[4,292.3],[4,279.3],[4,276.7],[4,97.6],[4,246.9],[4,237.7],[4,232.3],
  [3,174.8],[5,285.5],[4,285.8],[4,289],[6,293.3],[5,299.5],[3,302.4],[4,323.3],[4,337.7],[0,0],
  [2,227.3],[2,228.4],[2,230.9],[2,232.3],[2,107.7],[2,105.5],[2,102.2],[2,270.5],[2,90.2],[2,82],
  [2,70],[1,68],[2,35.6],[1,163.6],[1,160.5],[1,156.3],[0,153],[1,150.3],[0,141.8],[1,133.2],
  [0,127],[0,115],[0,111],[0,47],[0,27],[0,0],[0,226],[0,0],[0,0],[0,20]
];
const svg = document.getElementById('radial');
let out = '';
bars.forEach(([k, deg], i) => {
  const r = 216 - 4 * i;
  out += `<circle class="track" r="${r}"/>`;
  if (deg) out += `<circle class="ring k${k}" r="${r}" pathLength="360" stroke-dasharray="${deg} 400" transform="rotate(-90)"/>`;
});
out += '<path d="M0 -218V-18" stroke="#7b7686" stroke-width="1.500"/>';
out += '<circle r="18" fill="#fff"/><circle r="11.500" fill="#f3f3f3"/><circle r="9" fill="#e0e0e0"/>';
svg.innerHTML = out;
```
